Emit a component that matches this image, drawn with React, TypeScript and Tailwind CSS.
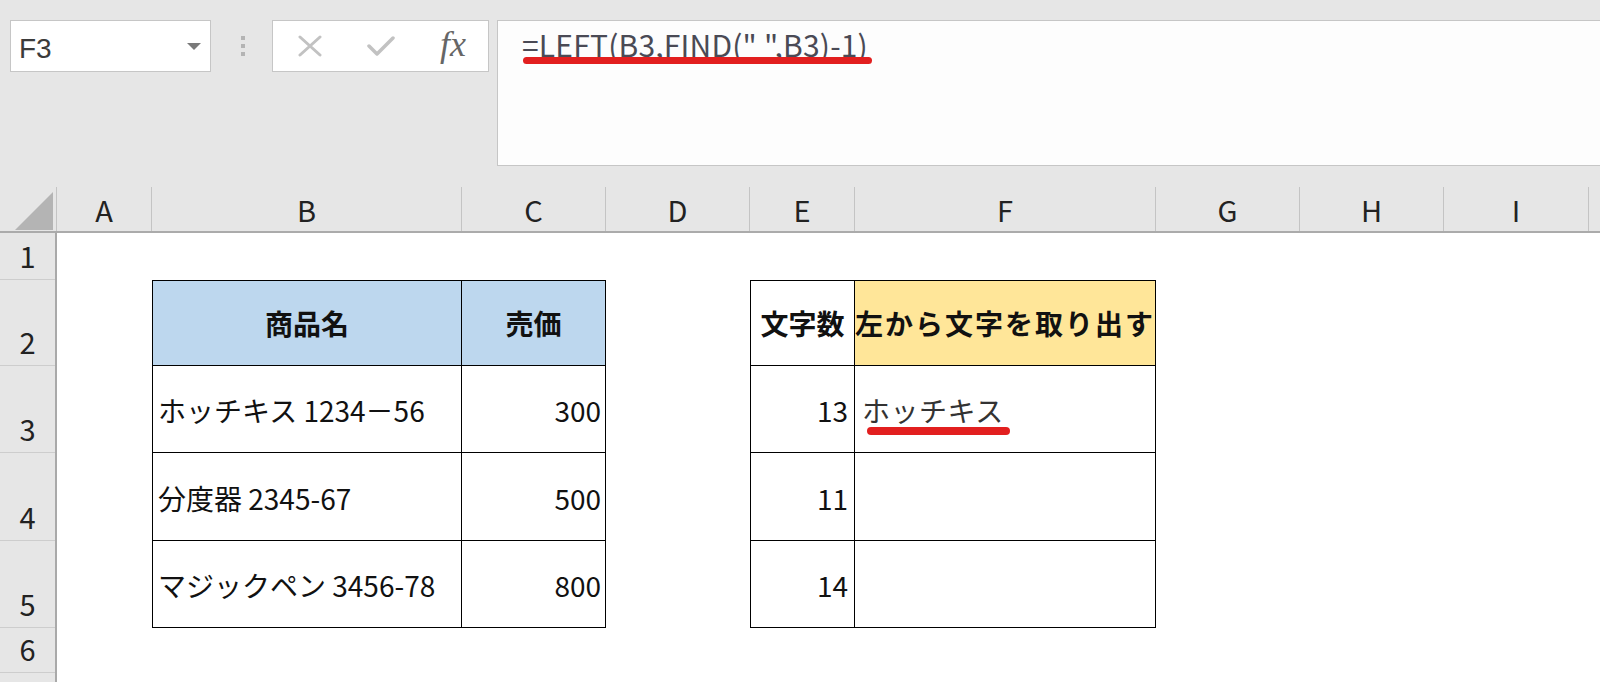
import React from "react"

const columns = [
  { label: "A", w: "w-[95px]" },
  { label: "B", w: "w-[310px]" },
  { label: "C", w: "w-[144px]" },
  { label: "D", w: "w-[144px]" },
  { label: "E", w: "w-[105px]" },
  { label: "F", w: "w-[301px]" },
  { label: "G", w: "w-[144px]" },
  { label: "H", w: "w-[144px]" },
  { label: "I", w: "w-[145px]" },
]

const rows = [
  { n: "1", h: "h-[47px]" },
  { n: "2", h: "h-[86px]" },
  { n: "3", h: "h-[87px]" },
  { n: "4", h: "h-[88px]" },
  { n: "5", h: "h-[87px]" },
  { n: "6", h: "h-[45px]" },
  { n: "", h: "h-[45px]" },
]

const products = [
  { name: "ホッチキス 1234－56", price: 300, rowH: "h-[87px]" },
  { name: "分度器 2345-67", price: 500, rowH: "h-[88px]" },
  { name: "マジックペン 3456-78", price: 800, rowH: "h-[87px]" },
]

const counts = [13, 11, 14]

const jp = "font-['Noto_Sans_CJK_JP',sans-serif]"

function NameBox() {
  return (
    <div className="w-[201px] h-[52px] bg-white border border-[#c6c6c6] flex items-center justify-between pl-[8px] pr-[9px]">
      <span className="font-['Liberation_Sans',sans-serif] text-[28px] leading-none text-[#3b3b3b] pt-[6px]">F3</span>
      <svg width="14" height="7" viewBox="0 0 14 7">
        <polygon points="0,0 14,0 7,7" fill="#7a7a7a" />
      </svg>
    </div>
  )
}

function FunctionButtons() {
  return (
    <div className="w-[217px] h-[52px] bg-white border border-[#c6c6c6] flex items-center pl-[25px] pr-[22px] justify-between">
      <svg width="24" height="22" viewBox="0 0 24 22">
        <path d="M2 2 L22 20 M22 2 L2 20" stroke="#c2c2c2" strokeWidth="3" strokeLinecap="round" />
      </svg>
      <svg width="28" height="22" viewBox="0 0 28 22">
        <path d="M2 11 L10 19 L26 3" stroke="#c2c2c2" strokeWidth="3.5" fill="none" strokeLinecap="round" strokeLinejoin="round" />
      </svg>
      <span className="font-['Liberation_Serif',serif] italic text-[36px] leading-none text-[#666] pb-[4px]">fx</span>
    </div>
  )
}

function FormulaBar() {
  return (
    <div className="flex-1 h-[146px] bg-[#fdfdfd] border-y border-l border-[#c6c6c6] pl-[24px] pt-[8px]">
      <div className="relative inline-block">
        <span className={`${jp} text-[30px] leading-none text-[#4a4a55] tracking-[0.2px]`}>
          =LEFT(B3,FIND(" ",B3)-1)
        </span>
        <div className="absolute left-[1px] right-[-4px] top-[28px] h-[7px] rounded-full bg-[#e21f1f]" />
      </div>
    </div>
  )
}

function ColumnHeader() {
  return (
    <div className="flex h-[46px] shrink-0 bg-[#e6e6e6] border-b-2 border-[#ababab]">
      <div className="w-[57px] shrink-0 border-r border-[#c4c4c4] relative">
        <svg className="absolute left-0 top-0" width="57" height="44" viewBox="0 0 57 44">
          <polygon points="15,43 53,5 53,43" fill="#b4b4b4" />
        </svg>
      </div>
      {columns.map((c) => (
        <div
          key={c.label}
          className={`${c.w} shrink-0 border-r border-[#c4c4c4] flex items-center justify-center ${jp} text-[29px] leading-none text-[#222]`}
        >
          {c.label}
        </div>
      ))}
      <div className="flex-1" />
    </div>
  )
}

function RowHeader() {
  return (
    <div className="w-[57px] shrink-0 bg-[#e6e6e6] border-r-2 border-[#a9a9a9] flex flex-col">
      {rows.map((r, i) => (
        <div
          key={i}
          className={`${r.h} shrink-0 border-b border-[#cdcdcd] flex items-end justify-center pb-[9px] ${jp} text-[29px] leading-none text-[#222]`}
        >
          {r.n}
        </div>
      ))}
    </div>
  )
}

function ProductTable() {
  return (
    <div className={`border-l border-t border-black flex flex-col ${jp} text-[28px] text-[#111]`}>
      <div className="flex h-[85px] bg-[#bdd7ee] font-bold">
        <div className="w-[309px] border-r border-b border-black flex items-center justify-center">商品名</div>
        <div className="w-[144px] border-r border-b border-black flex items-center justify-center">売価</div>
      </div>
      {products.map((p) => (
        <div key={p.name} className={`flex ${p.rowH}`}>
          <div className="w-[309px] border-r border-b border-black flex items-center pl-[5px] pt-[2px] whitespace-nowrap">
            {p.name}
          </div>
          <div className="w-[144px] border-r border-b border-black flex items-center justify-end pr-[4px] pt-[2px]">
            {p.price}
          </div>
        </div>
      ))}
    </div>
  )
}

function ExtractTable() {
  return (
    <div className={`border-l border-t border-black flex flex-col ${jp} text-[28px] text-[#111]`}>
      <div className="flex h-[85px] font-bold">
        <div className="w-[104px] border-r border-b border-black flex items-center justify-center bg-white">文字数</div>
        <div className="w-[301px] border-r border-b border-black flex items-center justify-center bg-[#ffe699] tracking-[2px] whitespace-nowrap">
          左から文字を取り出す
        </div>
      </div>
      {counts.map((c, i) => (
        <div key={c} className={`flex ${products[i].rowH}`}>
          <div className="w-[104px] border-r border-b border-black flex items-center justify-end pr-[6px] pt-[2px]">
            {c}
          </div>
          <div className="w-[301px] border-r border-b border-black flex items-center pl-[7px] pt-[2px]">
            {i === 0 && (
              <span className="relative text-[#333] tracking-[0.5px]">
                ホッチキス
                <span className="absolute left-[5px] right-[-6px] bottom-[-4px] h-[8px] rounded-full bg-[#e21f1f]" />
              </span>
            )}
          </div>
        </div>
      ))}
    </div>
  )
}

export default function App() {
  return (
    <div className="w-[1600px] h-[682px] overflow-hidden bg-white flex flex-col">
      <div className="h-[187px] shrink-0 bg-[#e6e6e6] flex items-start pt-[20px] pl-[10px]">
        <NameBox />
        <div className="w-[61px] h-[52px] flex flex-col items-center justify-center gap-[4px] pl-[2px]">
          <div className="w-[4px] h-[4px] bg-[#b4b4b4]" />
          <div className="w-[4px] h-[4px] bg-[#b4b4b4]" />
          <div className="w-[4px] h-[4px] bg-[#b4b4b4]" />
        </div>
        <FunctionButtons />
        <div className="w-[8px]" />
        <FormulaBar />
      </div>
      <ColumnHeader />
      <div className="flex flex-1 min-h-0 overflow-hidden">
        <RowHeader />
        <div className="flex-1 grid grid-cols-[95px_310px_144px_144px_105px_301px_144px_144px_145px_1fr] grid-rows-[47px_348px_1fr]">
          <div className="col-start-2 col-span-2 row-start-2">
            <ProductTable />
          </div>
          <div className="col-start-5 col-span-2 row-start-2">
            <ExtractTable />
          </div>
        </div>
      </div>
    </div>
  )
}
